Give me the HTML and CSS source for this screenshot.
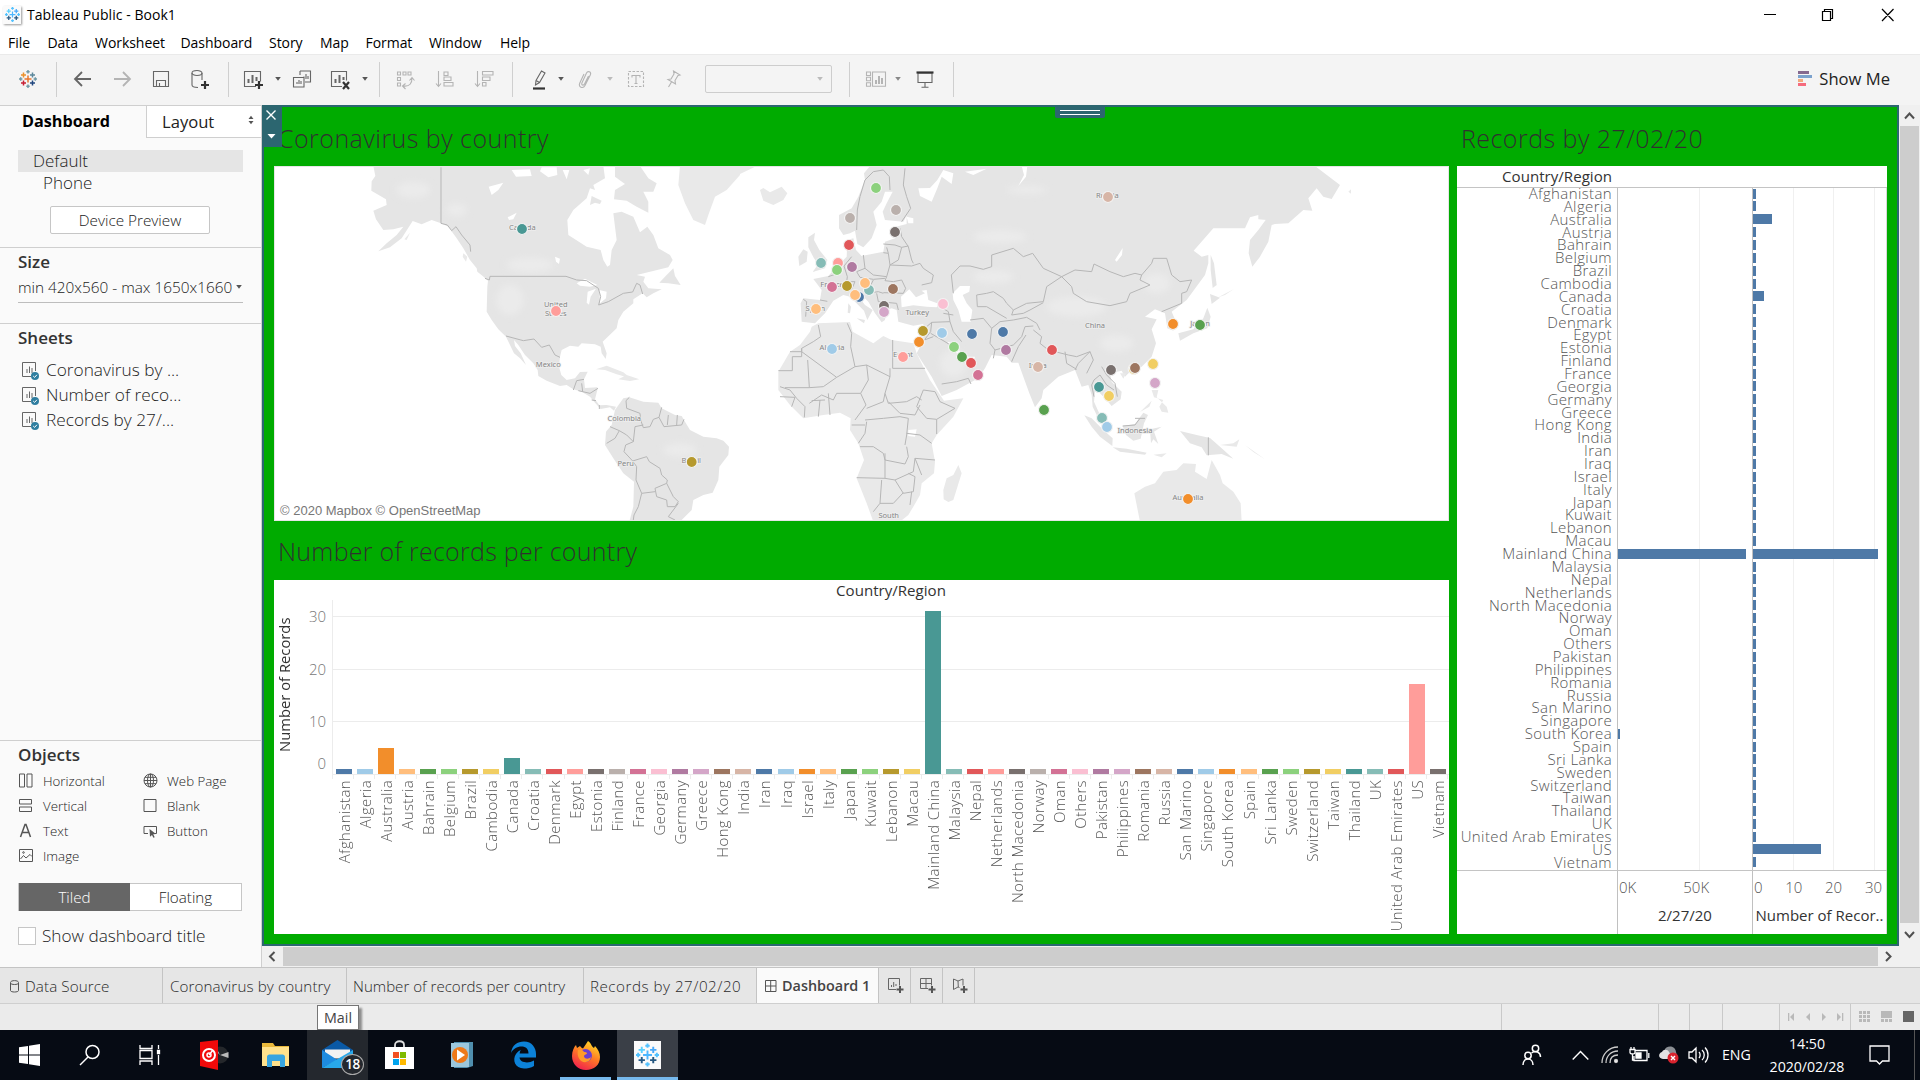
FILE: index.html
```html
<!DOCTYPE html>
<html lang="en">
<head>
<meta charset="utf-8">
<title>Tableau Public - Book1</title>
<link rel="stylesheet" href="styles.css">
</head>
<body>
<svg class="defs" width="0" height="0">
  <defs>
    <symbol id="plus-logo" viewBox="0 0 18 18">
      <path class="p1" d="M9 5.5v7M5.5 9h7"/>
      <path class="p2" d="M4.5 2.5v5M2 5h5"/>
      <path class="p3" d="M13.500 2.500v5M11 5h5"/>
      <path class="p4" d="M4.500 10.500v5M2 13h5"/>
      <path class="p5" d="M13.500 10.500v5M11 13h5"/>
      <path class="p6" d="M9 0v3.400M7.300 1.700h3.400M9 14.600V18M7.300 16.300h3.400M0 9h3.400M1.700 7.300v3.400M14.600 9H18M16.300 7.300v3.400"/>
    </symbol>
    <symbol id="caret" viewBox="0 0 8 6"><path d="M1.200 1h5.600L4 4.800z"/></symbol>
    <symbol id="sheet" viewBox="0 0 18 20">
      <path d="M9 14.500H.5V.5h13v8.500" fill="none" stroke="#666"/>
      <path d="M5 11V7M7.500 11V4.500M10 11V6" stroke="#666"/>
      <circle cx="13" cy="14" r="4" fill="#2f7ea0"/><path d="M11.200 14l1.400 1.400 2.300-2.600" fill="none" stroke="#fff"/>
    </symbol>
  </defs>
</svg>

<header class="titlebar">
  <span class="app-icon"><svg class="logo blue" width="15" height="15"><use href="#plus-logo"/></svg></span>
  <span class="app-title">Tableau Public - Book1</span>
  <svg class="winbtns" width="132" height="16" viewBox="0 0 132 16" fill="none" stroke="#000" stroke-width="1.2">
    <path d="M0 7.500h12M58.500 4.500h8v9h-8zM60.500 4.500v-2h8v9h-2M118 2l11.500 12M129.500 2L118 14"/>
  </svg>
</header>

<nav class="menubar">
  <span class="m1">File</span><span class="m2">Data</span><span class="m3">Worksheet</span><span class="m4">Dashboard</span><span class="m5">Story</span><span class="m6">Map</span><span class="m7">Format</span><span class="m8">Window</span><span>Help</span>
</nav>

<div class="toolbar">
  <svg class="ic logo" viewBox="-3 -3 24 24"><use href="#plus-logo" width="18" height="18"/></svg>
  <i class="sep g16"></i>
  <svg class="ic g14 bold" viewBox="0 0 24 24"><path d="M20 12H4.500M11 5l-7 7 7 7"/></svg>
  <svg class="ic g15 bold dim" viewBox="0 0 24 24"><path d="M4 12h15.500M13 5l7 7-7 7"/></svg>
  <svg class="ic g15" viewBox="0 0 24 24"><path d="M4.500 4.500h15v15h-15zM7.500 19.500v-6h9v6M10.500 19v-3"/></svg>
  <svg class="ic g15" viewBox="1 0 24 24"><ellipse cx="10" cy="6" rx="5" ry="2.500"/><path d="M5 6v12c0 1.500 2 2.500 6 2.500M15 6v7"/><path class="heavy" d="M18 14v8M14 18h8"/></svg>
  <i class="sep g16"></i>
  <svg class="ic g12" viewBox="0 0 24 24"><path d="M15 19.500H3.500v-15h16v10"/><path class="mid" d="M7.500 16v-4M11.500 16V8M15.500 14v-4"/><path class="heavy" d="M18 14v8M14 18h8"/></svg>
  <svg class="car g9" viewBox="0 0 8 6"><use href="#caret"/></svg>
  <svg class="ic g8" viewBox="0 0 24 24"><path d="M10 4H20.500v11H15M10 4v4M3.500 10.500h10.500v9.500H3.500zM7 17v-2M9 17v-4M11 17v-3M14 12V9.500M16 12V7M18 12V9"/></svg>
  <svg class="ic g14" viewBox="0 0 24 24"><path d="M14 19.500H3.500v-15h15v9"/><path class="mid" d="M7.500 16v-4M11.500 16V8M15.500 13v-3"/><path class="heavy" d="M15 15l6 7M21 15l-6 7"/></svg>
  <svg class="car g9" viewBox="0 0 8 6"><use href="#caret"/></svg>
  <i class="sep g10"></i>
  <svg class="ic g13 dim" viewBox="0 0 24 24"><path d="M4.500 5h3v3h-3zM10 5h3v3h-3zM15 5h3v3h-3zM4.500 10.500h3v3h-3zM4.500 16h3v3h-3zM10 19c7 1 9-3 9-8M12.500 16.500L9.500 19l3 3M16.500 13.500l2.500-3 2.500 3"/></svg>
  <svg class="ic g16 dim" viewBox="0 0 24 24"><path d="M5.500 4v15M3 16.500l2.500 3 2.500-3M11 5h4v3.500h-4zM11 10h7v3.500h-7zM11 15.500h9V19h-9z"/></svg>
  <svg class="ic g15 dim" viewBox="0 0 24 24"><path d="M5.500 4v15M3 16.500l2.500 3 2.500-3M10.500 4.500H21V8H10.500zM10.500 10H18v3.500h-7.500zM10.500 15.500H14V19h-3.500z"/></svg>
  <i class="sep g16"></i>
  <svg class="ic g14" viewBox="0 0 24 24"><path d="M9 13.500L14.500 4l3.500 2-5.500 9.500L8.500 18zM9 13.500l3.500 2"/><path class="heavy" d="M6 21.500h12" stroke-width="2"/></svg>
  <svg class="car g6" viewBox="0 0 8 6"><use href="#caret"/></svg>
  <svg class="ic g8 dim" viewBox="0 0 24 24"><path d="M15.500 9l-4 8c-1 2-3.500 1-2.600-1L13.500 6c1.300-2.600 5-1 3.900 1.700L12 18.500c-2 3.800-7 1.500-5.300-2.300L11 7"/></svg>
  <svg class="car g9 dimc" viewBox="0 0 8 6"><use href="#caret"/></svg>
  <svg class="ic g10 dim" viewBox="0 0 24 24"><path d="M4.500 4.500h15v15h-15z" stroke-dasharray="2.500 1.500"/><path d="M8 8.500h8M12 8.500v8M8 8v2.500M16 8v2.500M10.500 16.500h3"/></svg>
  <svg class="ic g13 dim" viewBox="0 0 24 24"><path d="M12.500 4l6.500 4-2 .5-3 5 .5 3.500L7 12.500l3-.5 3-5zM10.500 15L7.500 20"/></svg>
  <span class="fitbox g20"><svg class="car dimc" viewBox="0 0 8 6"><use href="#caret"/></svg></span>
  <i class="sep g17"></i>
  <svg class="ic g14 dim" viewBox="0 0 24 24"><path d="M2.500 5h4v3.500h-4zM2.500 10.300h4v3.500h-4zM2.500 15.700h4v3.500h-4zM8.500 5h13v14.200h-13z"/><path class="mid" d="M12 17v-4M15 17V9M18 17v-6"/></svg>
  <svg class="car g6 dimc2" viewBox="0 0 8 6"><use href="#caret"/></svg>
  <svg class="ic g11" viewBox="0 0 24 24"><path d="M5 6h14v9.500H5zM12 15.500V20M8.500 20.300h7"/><path class="heavy" d="M3.500 5.500h17" stroke-width="1.800"/></svg>
  <i class="sep g16"></i>
  <span class="showme"><svg width="15" height="16" viewBox="0 0 15 16"><path fill="#85698f" d="M0 0h11v3H0z"/><path fill="#7ca2cd" d="M0 4h14v3H0z"/><path fill="#f2a97d" d="M0 8h5v3H0z"/><path fill="#f56b7d" d="M0 12h8v3H0z"/></svg>Show Me</span>
</div>

<main class="workspace">
  <aside class="sidebar">
    <div class="sidetabs"><b>Dashboard</b><span>Layout<svg width="8" height="10" viewBox="0 0 8 10"><path fill="#555" d="M1.500 4h5L4 .8zM1.500 6h5L4 9.200z"/></svg></span></div>
    <div class="devices"><p class="sel">Default</p><p class="phone">Phone</p><button>Device Preview</button></div>
    <section class="size"><h2>Size</h2><div class="select">min 420x560 - max 1650x1660<svg class="car" viewBox="0 0 8 6"><use href="#caret"/></svg></div></section>
    <section class="sheets"><h2>Sheets</h2>
      <p><svg width="18" height="20"><use href="#sheet"/></svg>Coronavirus by ...</p>
      <p><svg width="18" height="20"><use href="#sheet"/></svg>Number of reco...</p>
      <p><svg width="18" height="20"><use href="#sheet"/></svg>Records by 27/...</p>
    </section>
    <section class="objects"><h2>Objects</h2>
      <div class="objgrid">
        <p><svg viewBox="0 0 15 15"><path d="M.5 1h5v13h-5zM8 1h5v13H8z"/></svg>Horizontal</p>
        <p><svg viewBox="0 0 15 15"><circle cx="7.500" cy="7.500" r="6.500"/><ellipse cx="7.500" cy="7.500" rx="3" ry="6.500"/><path d="M1 7.500h13M2 4.300h11M2 10.700h11M7.500 1v13"/></svg>Web Page</p>
        <p><svg viewBox="0 0 15 15"><path d="M.5 1.500h12v4.500H.5zM.5 9h12v4.500H.5z"/></svg>Vertical</p>
        <p><svg viewBox="0 0 15 15"><path d="M1 1.500h12v12H1z"/></svg>Blank</p>
        <p><svg viewBox="0 0 15 15"><path stroke-width="1.500" d="M1.500 14L6 1.500h1L11.500 14M3 9.500h7"/></svg>Text</p>
        <p><svg viewBox="0 0 15 15"><path d="M5 10.500H1v-7h12.500v7H12"/><path fill="#555" stroke="none" d="M6.500 6l6.500 5-2.800.3 1.500 2.900-1.300.6-1.400-2.900-2 1.900z"/></svg>Button</p>
        <p><svg viewBox="0 0 15 15"><path d="M.5 1.500h13v12H.5zM1.500 11l3-3.500 2.500 2.500 4-3.500 2 2"/><circle cx="4.500" cy="4.500" r=".8"/></svg>Image</p>
      </div>
      <div class="toggle"><span class="on">Tiled</span><span>Floating</span></div>
      <label class="check"><i></i>Show dashboard title</label>
    </section>
  </aside>

  <div class="stage">
    <div class="canvas">
      <div class="dash">
        <div class="dash-left">
          <h1>Coronavirus by country</h1>
          <div class="map">
            <svg id="map" viewBox="274 166 1175 355" width="1175" height="355">
              <defs><filter id="soft" x="-50%" y="-50%" width="200%" height="200%"><feGaussianBlur stdDeviation="9"/></filter></defs>
              <g class="land" transform="translate(360 160) scale(.33333)">
                <path d="M40,18L46,48 35,64 34,92 78,118 80,135 40,152 48,178 70,210 100,208 130,200 110,225 80,250 55,274 90,262 125,235 158,183 185,193 215,180 243,190 265,200 290,235 310,265 330,300 350,325 352,335 368,348 384,362 382,380 380,455 395,480 415,508 438,530 450,555 462,580 480,595 498,615 482,580 465,558 462,540 475,555 495,585 520,610 533,630 535,648 560,662 600,678 620,675 640,688 665,695 690,710 705,728 722,747 750,742 762,752 768,740 740,735 718,736 705,718 712,690 712,682 675,684 672,658 683,635 660,636 645,655 620,660 604,645 597,620 600,590 605,570 630,557 655,560 665,550 705,553 722,560 725,580 737,597 740,580 728,545 770,505 775,480 790,455 820,430 820,418 848,400 860,412 880,400 905,388 865,385 850,365 855,350 830,345 870,335 925,322 938,300 930,285 895,265 880,225 862,200 840,217 820,170 785,155 760,160 765,200 770,240 755,270 750,315 742,320 730,300 722,270 680,260 625,225 622,180 640,150 680,115 690,85 705,90 700,75 735,55 730,18z"/>
                <path d="M765,18H840L865,55 890,70 880,95 850,95 865,125 865,158 830,140 800,122 762,118 765,90 795,72 765,50zM690,135L695,108 725,122 720,132 705,128zM898,368L920,345 940,325 945,348 962,375 925,370z"/>
                <path class="lt" d="M960,18L955,75 975,130 1000,180 1035,195 1045,165 1065,110 1100,90 1140,45V18z"/>
                <path class="lt" d="M708,628L740,617 790,637 812,655 770,643 735,630zM775,658L800,645 838,658 810,663zM310,280L322,290 318,305 308,290zM150,218L140,240 133,238z"/>
                <path d="M765,750L790,715 808,712 850,725 895,728 905,745 945,765 965,768 975,785 990,810 1030,830 1070,835 1090,842 1107,860 1105,885 1078,920 1075,960 1058,998 1030,1005 1000,1020 995,1050 960,1085H808L820,1040 822,965 790,940 760,895 735,855 738,815 755,795z"/>
                <g class="relief" filter="url(#soft)"><ellipse cx="510" cy="315" rx="70" ry="22"/><ellipse cx="160" cy="90" rx="50" ry="25"/><ellipse cx="290" cy="150" rx="30" ry="20"/><ellipse cx="450" cy="420" rx="40" ry="45"/><ellipse cx="960" cy="870" rx="50" ry="20"/></g>
                <path class="sea" d="M650,370L675,356 712,375 690,380 660,377zM683,395L708,386 692,410 687,434 680,428zM718,390L740,395 738,415 720,430zM386,80L430,68 415,90 395,105zM443,172L470,158 460,178 447,180zM585,290L600,296 597,312 588,305zM455,30L510,28 515,48 468,50zM540,34L565,52 592,45 590,22 545,22zM608,30L628,30 620,58zM670,30L690,25 685,45z"/>
                <path class="brd" d="M243,22V190L262,195 275,212 288,200 305,225 330,255 332,275M375,355L388,360 390,349H618L650,360 680,362 715,385 722,410 716,435 745,425 790,400 818,396 830,370 840,375 848,402M438,528L490,542 522,537 545,562 568,555 585,585 600,592M640,690L650,662 672,658M655,692L690,700 714,685M665,670L668,695M695,720L708,722M718,735V747M808,712L798,722 800,745 840,760 842,780 850,803 870,800 880,778 897,772 905,742M897,772L912,800 965,795 972,778M925,765L922,795M952,765L950,795M750,800L778,812 800,825 820,845 825,800 850,795M778,812L765,835 740,850M820,845L797,855 792,875 818,903 860,890 868,905 900,925 905,945 922,960 920,970 885,985 890,1010 920,1020 922,1040 945,1040 955,1025 940,1010 920,970M818,903L830,920 828,960 845,1000 885,995M845,1000L835,1040 822,1065 820,1080M955,1030L925,1070 945,1080"/>
              </g>
              <g class="land" transform="translate(740 160) scale(.33333)">
                <path class="lt" d="M0,18H50L0,42zM60,90L70,84 90,97 125,80 142,100 130,120 100,135 70,122zM655,915L665,940 640,1020 625,1026 611,1018 610,990 620,955 640,945z"/>
                <path d="M205,232L225,218 222,240 238,270 262,300 255,325 218,336 235,312 222,295 205,262zM175,290L190,268 203,275 200,305 178,318zM390,18H505L512,145 490,185 435,180 428,155 440,130 458,95 435,95 425,125 400,155 410,195 395,235 370,262 352,252 345,212 330,220 310,225 297,205 297,165 335,145 355,110 375,60 372,40z"/>
                <path d="M500,18H1725L1800,75 1775,117 1750,110 1730,85 1705,115 1717,152 1690,150 1645,190 1605,192 1595,195 1585,245 1560,290 1537,320 1526,280 1530,240 1555,210 1595,155 1580,180 1555,178 1555,165 1530,172 1515,205 1420,205 1361,272 1385,290 1405,285 1405,310 1395,345 1340,420 1295,455 1310,490 1300,512 1282,505 1275,460 1245,448 1215,470 1250,478 1235,508 1248,550 1235,590 1205,620 1170,635 1155,650 1145,632 1110,640 1115,665 1145,695 1142,718 1115,738 1095,715 1080,700 1065,695 1062,725 1080,765 1095,795 1080,785 1058,740 1055,705 1045,675 1025,680 1005,630 955,650 910,690 905,715 885,742 868,700 850,650 835,608 815,608 800,590 755,585 735,625 715,655 650,690 605,708 575,650 530,580 548,545 550,492 520,497 475,485 470,450 455,445 440,450 435,480 425,487 405,460 385,425 360,400 345,395 375,435 398,450 382,480 372,452 330,410 310,405 280,422 255,460 225,490 185,485 182,430 190,415 240,420 245,390 220,357 265,348 290,320 320,290 322,240 340,235 348,270 365,288 430,275 435,245 465,235 468,200 500,192z"/>
                <path class="lt" d="M235,490L330,486 338,515 400,550 430,528 455,540 520,550 530,580 550,620 570,660 605,712 612,722 670,715 640,770 590,825 575,850 585,905 582,940 545,970 540,1005 520,1040 505,1065 480,1085H400L380,1030 350,955 372,900 355,850 330,810 332,775 300,758 250,765 190,775 150,735 115,690 115,635 150,575 180,555 210,515 215,500z"/>
                <g class="relief" filter="url(#soft)"><ellipse cx="640" cy="610" rx="40" ry="40"/><ellipse cx="1010" cy="440" rx="90" ry="30"/><ellipse cx="1130" cy="550" rx="50" ry="25"/><ellipse cx="780" cy="230" rx="80" ry="20"/><ellipse cx="860" cy="90" rx="60" ry="12"/><ellipse cx="760" cy="350" rx="60" ry="20"/><ellipse cx="1250" cy="370" rx="40" ry="30"/></g>
                <path class="sea" d="M483,410L508,388 528,412 555,400 545,392 560,390 565,420 598,432 590,442 560,440 520,436 485,442zM638,400L660,378 690,378 688,395 668,405 680,430 697,450 692,485 665,485 655,450 640,420zM622,545L642,550 672,590 705,590 700,604 680,600 655,585zM610,30L640,40 635,72 605,50 592,85 575,125 540,108 535,85 570,84 592,60zM675,35L740,26 700,45zM835,78L858,50 862,18H845L852,45zM500,170L520,175 520,190 505,190zM505,810L530,808 525,830 505,828zM1125,300L1148,264 1146,285 1130,305z"/>
                <path d="M325,430L333,440 330,460 323,458zM350,475L375,480 372,490z"/>
                <path class="brd" d="M375,60L360,110 352,150 350,210M375,60L400,35 430,30 448,50 450,90M495,25L490,75 500,110 512,145 485,185M480,205L485,230 505,260 515,300 520,310M430,252L465,255 485,262 505,258M445,280L440,262M370,285L375,325 400,345 440,350 450,315 445,280 430,278M450,315L475,300 485,262M450,315L515,318 540,310 550,325 580,345 575,368 545,375M440,350L435,362 460,365 485,360 497,385 490,400 430,398M335,290L312,318 322,350 320,365 345,365M265,350L300,338M375,325L350,335 360,352 400,358 435,355M400,360L380,400 415,395 430,400M410,400L415,425 470,430 475,450M200,425L197,470M190,418L200,425M240,420L262,424M345,365L330,400M640,400L634,345 660,318 690,318 730,328 755,320 755,285 820,265 850,290 878,280 910,325 965,350M965,350L920,380 910,425 860,430 820,450 800,430 790,415 760,395 740,400 710,405 712,440M712,440L740,440 800,475M820,450L815,465 850,460 870,450 910,428M690,480L730,475 755,505 750,550 765,570 760,595M755,505L780,485 820,480 860,472 890,490 900,510M765,570L820,555 845,530 855,500 880,498M858,525L835,560 815,605M880,510L905,530 900,550 925,570 985,585M985,585L1010,590 1050,575 1060,600 1040,640M975,575L980,610 1010,628M1005,630L1015,610 1050,575M600,440L625,455 630,485 575,487 560,500M610,460L640,465 M575,487L572,515 553,540 580,530 M572,520L615,545 635,558M630,485L640,515 665,545M605,672L650,665 685,655 693,672M965,350L995,380 1000,400 1040,425 1110,437 1160,425 1170,400 1230,375 1200,360 1205,345 1185,340 1150,350 1110,335 1062,312 1055,335 1005,330 965,350M1205,345L1235,310 1240,295 1280,295 1295,345 1320,365 1355,360 1340,395 1325,400 1325,430 1265,455M1085,620L1100,645 1125,670 1132,710M1062,660L1080,645 1100,675 1122,690M1062,660L1055,675 1062,710"/>
                <path class="brd" d="M235,495L242,530 220,545 185,565V575H150M185,565V590H157V632H115M185,575L290,652 345,620 332,560 335,520 322,490M345,620L380,615 450,650M458,540V625H555M450,625V650L435,700M203,600L208,683H135M208,683L250,680 290,652M380,615L385,660 362,700 290,700 280,720 245,705 208,730M265,700L270,765M240,720L235,770M215,722L255,720M362,700L378,735 345,780M435,700L430,725 380,745M435,700L445,730 500,725 530,710 545,720M445,725L480,760 525,765 540,735M550,690L530,740 560,775 590,778 645,745 600,725 585,695 550,690M590,778V822M375,780L430,775 480,770 505,775 500,825 495,855M380,785L375,820 355,850M335,795H375M360,860L400,860 430,880 435,900M435,880V955L350,953M435,900L495,912 505,890 500,860M435,955L465,960 520,935 525,895 585,900M500,820L540,825 575,850M465,960L490,1000 520,995 525,950 505,940M425,960L420,1030 460,1030 490,998M420,1030L400,1055M515,995L510,1035M120,680L150,690 170,715M120,710L165,712 155,740M170,715L195,740 193,772M525,895L545,945"/>
              </g>
              <g class="land" transform="translate(1020 160) scale(.33333)">
                <path d="M193,766L215,775 250,810 278,835 277,858 240,830 215,800zM278,862L320,866 380,878 375,884 300,875zM308,798L345,792 370,758 384,765 372,790 362,836 340,842 318,825zM390,808L425,800 402,815 415,852 400,838 393,850zM480,813L530,825 570,834 600,860 640,896 605,882 560,886 545,862 510,850zM475,520L520,508 550,475 562,443 572,470 562,505 520,520 480,542zM570,402L600,413 575,432zM572,285L582,310 590,375 578,384 572,330z"/>
                <path class="lt" d="M395,690L415,690 410,712 440,740 445,758 425,755 418,740 430,720 402,712zM300,640L318,640 310,656zM600,855L640,850 658,838 650,860zM360,756L395,722 388,740zM400,884L440,880 425,892zM985,95L993,88V101zM955,135L970,139zM675,855L735,898 700,876zM595,412L642,387 615,405z"/>
                <path class="lt" d="M360,1085L343,1000 375,980 405,970 430,935 470,930 490,910 528,912 525,935 560,957 575,900 600,945 608,970 640,995 662,1030 665,1085z"/>
                <path class="brd" d="M565,832V886M345,775H375M308,798L345,795 360,775"/>
              </g>
              <g id="labels"></g>
              <g id="dots"></g>
            </svg>
            <span class="attrib">© 2020 Mapbox © OpenStreetMap</span>
          </div>
          <h1 class="tight">Number of records per country</h1>
          <div class="colchart">
            <div class="cc-head">Country/Region</div>
            <div class="cc-axis"><span class="cc-title">Number of Records</span><span class="cc-tick t30">30</span><span class="cc-tick t20">20</span><span class="cc-tick t10">10</span><span class="cc-tick t0">0</span></div>
            <div class="cc-plot" id="cols"></div>
          </div>
        </div>
        <div class="dash-right">
          <h1>Records by 27/02/20</h1>
          <div class="rowchart">
            <div class="rc-head"><span>Country/Region</span></div>
            <div class="rc-rows" id="rows"></div>
            <div class="rc-foot">
              <div></div>
              <div class="f1"><div class="ticks"><span>0K</span><span>50K</span></div><b>2/27/20</b></div>
              <div class="f2"><div class="ticks"><span>0</span><span>10</span><span>20</span><span>30</span></div><b>Number of Recor..</b></div>
            </div>
          </div>
        </div>
        <div class="closebox"><svg width="20" height="42" viewBox="0 0 20 42"><path d="M4.500 5.500l9 9M13.500 5.500l-9 9" stroke="#fff" stroke-width="1.400"/><path d="M5.500 29h8l-4 4.500z" fill="#fff"/></svg></div>
        <div class="grip"><i></i><i></i></div>
      </div>
      <div class="vscroll"><svg viewBox="0 0 21 21"><path d="M6 13.500l4.500-5 4.500 5"/></svg><i></i><svg viewBox="0 0 21 21"><path d="M6 8l4.500 5L15 8"/></svg></div>
    </div>
    <div class="hscroll"><svg viewBox="0 0 21 21"><path d="M12.500 6L8 10.500l4.500 4.500"/></svg><i></i><svg viewBox="0 0 21 21"><path d="M8 6l4.500 4.500L8 15"/></svg><em></em></div>
  </div>
</main>

<nav class="tabs">
  <span class="tab ds"><svg width="9" height="13" viewBox="0 0 9 13" fill="none" stroke="#555"><path d="M.5 2.500C.5 0 8.500 0 8.500 2.500v8c0 2-8 2-8 0zM.5 3c0 2 8 2 8 0"/></svg>Data Source</span>
  <span class="tab w184">Coronavirus by country</span>
  <span class="tab w237">Number of records per country</span>
  <span class="tab w173">Records by 27/02/20</span>
  <span class="tab active"><svg width="12" height="12" viewBox="0 0 12 12" fill="none" stroke="#555"><path d="M.5.5h10.500v11H.5zM5.700.5v11M.5 6h10.500"/></svg>Dashboard 1</span>
  <span class="tab new"><svg viewBox="0 0 16 16"><path d="M8 11.500H.5V.5h11v7M3.500 9V7M5.700 9V4M8 8V6"/><path class="pl" d="M12 8v7M8.500 11.500h7"/></svg></span>
  <span class="tab new"><svg viewBox="0 0 16 16"><path d="M8 10.500H.5V.5h11v7M6 .5v10M.5 5.500h11"/><path class="pl" d="M12 8v7M8.500 11.500h7"/></svg></span>
  <span class="tab new"><svg viewBox="0 0 16 16"><path d="M7.500 9.500L6 9l-4.500 2.500V1l4.500 2 5-2v6.500M6 3l.300 6"/><path class="pl" d="M12 8v7M8.500 11.500h7"/></svg></span>
</nav>

<div class="status">
  <span class="s0"></span><span class="s1"></span><span class="s2"></span><span class="s3"></span><span class="s4"></span>
  <span class="s5"><svg width="60" height="10" viewBox="0 0 60 10" fill="#b9b9b9"><path d="M1 1h1.300v8H1zM7 1v8L3 5zM23 1v8l-4-4zM35 1v8l4-4zM50 1v8l4-4zM55 1h1.300v8H55z"/></svg></span>
  <span class="s6"><svg width="56" height="12" viewBox="0 0 56 12" fill="#b9b9b9"><path d="M0 0h3v3H0zM4 0h3v3H4zM8 0h3v3H8zM0 4h3v3H0zM4 4h3v3H4zM8 4h3v3H8zM0 8h3v3H0zM4 8h3v3H4zM8 8h3v3H8zM22 0h11v7H22zM22 8h3v3h-3zM26 8h3v3h-3zM30 8h3v3h-3z"/><path fill="#666" d="M44 0h11v11H44z"/></svg></span>
  <span class="tooltip">Mail</span>
</div>

<footer class="taskbar">
  <div class="sys">
    <span><svg width="22" height="22" viewBox="0 0 22 22"><path fill="#fff" d="M0 3.200l9-1.300v8.600H0zM10 1.700L21 0v10.500H10zM0 11.500h9v8.600l-9-1.300zM10 11.500h11V22l-11-1.700z"/></svg></span>
    <span><svg width="22" height="22" viewBox="0 0 22 22" fill="none" stroke="#fff" stroke-width="1.500"><circle cx="13.500" cy="8" r="6.500"/><path d="M9 13l-8 8"/></svg></span>
    <span><svg width="22" height="22" viewBox="0 0 22 22" fill="none" stroke="#fff" stroke-width="1.300"><path d="M1 1v3.500h12V1M1 6.500h12v8H1zM1 21v-4h12v4M19.500 1v4M19.500 11v10"/><path fill="#fff" d="M18.500 6.500h2v3h-2z"/></svg></span>
  </div>
  <div class="apps">
    <span><svg width="32" height="30" viewBox="0 0 32 30"><circle cx="22" cy="15" r="8.500" fill="#24272b"/><path d="M22 15l8.500-3v6zM22 15l-6-6h3z" fill="#bbb"/><path fill="#f00a0a" d="M2 2L20 0v30L2 26z"/><circle cx="11" cy="15" r="6" fill="none" stroke="#fff" stroke-width="2"/><circle cx="11" cy="15" r="2" fill="none" stroke="#fff" stroke-width="1.500"/><path d="M11 15l4-5" stroke="#fff" stroke-width="1.500"/></svg></span>
    <span><svg width="28" height="26" viewBox="0 0 28 26"><path fill="#e9b93c" d="M0 1h11l2 3h14v7H0z"/><path fill="#ffe28c" d="M0 5h27v19H0z"/><path fill="#37a5e0" d="M5 25V15c0-1.500 1-2.500 2.500-2.500h13c1.500 0 2.500 1 2.500 2.500v10h-5v-6h-8v6z"/></svg></span>
    <span class="mail"><svg width="32" height="30" viewBox="0 0 32 30"><path fill="#0a59a5" d="M0 10L15.500 0 31 10v6H0z"/><path fill="#f2f2f2" d="M3 9.500h25v9H3z"/><path fill="#1d8be0" d="M0 10l15.500 10L0 28z"/><path fill="#28a8ea" d="M31 10L0 28h31z"/></svg><em>18</em></span>
    <span><svg width="30" height="30" viewBox="0 0 30 30"><path d="M10 9V5c0-5 9-5 9 0v4" fill="none" stroke="#ddd" stroke-width="1.800"/><path fill="#fff" d="M0 7h29v22H0z"/><path fill="#f25022" d="M8 12h6v6H8z"/><path fill="#7fba00" d="M15 12h6v6h-6z"/><path fill="#00a4ef" d="M8 19h6v6H8z"/><path fill="#ffb900" d="M15 19h6v6h-6z"/></svg></span>
    <span><svg width="26" height="28" viewBox="0 0 26 28"><path fill="#4f8fae" d="M5 1h19v24l-6 2H5z"/><path fill="#9cc7dc" d="M2 2h18v24H2z"/><circle cx="11" cy="14" r="8" fill="#ee7a1a"/><path fill="#fff" d="M8 8.500v11l8-5.500z"/></svg></span>
    <span><svg width="27" height="28" viewBox="0 0 27 28"><path fill="#0c82d8" d="M1 12C2 4 7.500.5 14 .5 22 .5 26 7 26 13v3.500H9.500c.4 5 8.500 6.500 14.500 3v5.500c-3 2-7 2.500-10 2.500C5 27.500 2 19 6 13c1.500-2.300 3.500-3.500 5-4.200-.8 1-1.300 2.200-1.300 3.700h8.800c0-6-4-7-7-7C7 5.500 3 8 1 12z"/></svg></span>
    <span class="running ff"><svg width="30" height="30" viewBox="0 0 30 30"><defs><linearGradient id="fx" x1=".8" y1="0" x2=".3" y2="1"><stop offset="0" stop-color="#ffe226"/><stop offset=".5" stop-color="#ff7a25"/><stop offset="1" stop-color="#f0204f"/></linearGradient></defs><path fill="url(#fx)" d="M1 16C1 11 3 7 5 5l1 3 3-2c1 1 1.500 2 3 2.500L17 1c4 3 3 5 6 7l1-2c3 3 5 7 5 11 0 8-6 13-14 13S1 24 1 16z"/><circle cx="14.500" cy="15.500" r="6.500" fill="#6b3ed0"/><path fill="#ff9a2a" d="M7 10c3-1 5 0 6 2 2 0 3 .5 3 1.500-1 1.500-3 1-3 3 1 3 5 2.500 7 .5-1 5-6 6-9 4.500C7 19 6 14 7 10z"/></svg></span>
    <span class="running current"><em class="tabicon"><svg class="logo blue" width="23" height="24"><use href="#plus-logo"/></svg></em></span>
  </div>
  <div class="tray">
    <svg width="20" height="22" viewBox="0 0 20 22" fill="none" stroke="#fff" stroke-width="1.500"><circle cx="13.500" cy="4.500" r="3.200"/><circle cx="6" cy="11.500" r="3.200"/><path d="M1 21c0-8 10-8 10 0M9.500 9c4-3 9-1 9 4"/></svg>
    <svg class="t1" width="17" height="12" viewBox="0 0 17 12" fill="none" stroke="#fff" stroke-width="1.400"><path d="M.7 10.500l7.800-8 7.800 8"/></svg>
    <svg class="t2" width="18" height="18" viewBox="0 0 18 18" fill="none" stroke="#ccc" stroke-width="1.300"><path d="M1 17C1 8 8 1 17 1M5 17C5 10 10 5 17 5M9 17c0-5 3-8 8-8"/><circle cx="15" cy="15" r="1.500" fill="#fff"/></svg>
    <svg class="t3" width="21" height="16" viewBox="0 0 21 16" fill="none" stroke="#fff" stroke-width="1.300"><path d="M6 3.500h12v10H5V9M19.800 6v5M1 2.500h5v3c0 2-5 2-5 0zM2 0v2M5 0v2M3.500 7v6H5"/><path fill="#fff" d="M7 6h5v5H7z"/></svg>
    <svg class="t4" width="20" height="18" viewBox="0 0 20 18"><path fill="#8b8f94" d="M5 5c2-6 11-6 12 1l1 4H6z"/><path fill="#e3e3e3" d="M4 13c-5 0-5-6-1-7 1-3 6-3 7 0l3 4-2 3z"/><circle cx="14" cy="12" r="5.500" fill="#d9232e"/><path d="M12 10l4 4M16 10l-4 4" stroke="#fff" stroke-width="1.400"/></svg>
    <svg class="t5" width="21" height="18" viewBox="0 0 21 18" fill="none" stroke="#fff" stroke-width="1.300"><path d="M1 6h3l4-4v14l-4-4H1zM11 6c1.500 1.500 1.500 4.500 0 6M14 4c3 2.500 3 7.500 0 10M17 1.500c4 4 4 11 0 15"/></svg>
    <span class="lang">ENG</span>
    <span class="clock">14:50<br>2020/02/28</span>
    <svg class="t6" width="21" height="20" viewBox="0 0 21 20" fill="none" stroke="#fff" stroke-width="1.300"><path d="M1 1h19v15h-6.500l-3 3-3-3H1z"/></svg>
    <i class="peek"></i>
  </div>
</footer>
<script src="charts.js"></script>
</body>
</html>
```
FILE: styles.css
```css
* { box-sizing: border-box; margin: 0; padding: 0; }
body { width: 1920px; height: 1080px; overflow: hidden; display: flex; flex-direction: column; background: #fff; font: 300 15px/20px "Open Sans", "Noto Sans", sans-serif; color: #333; }
svg { display: block; flex: none; }
.defs { position: absolute; }
i, em { font-style: normal; }
.p1 { stroke: #e8762d; } .p2 { stroke: #eb912b; } .p3 { stroke: #5b879b; } .p4 { stroke: #c72035; } .p5 { stroke: #1f457e; } .p6 { stroke: #7199a6; }
#plus-logo path { fill: none; stroke-width: 1.5; }
.blue { filter: grayscale(1) sepia(1) hue-rotate(165deg) saturate(3.2); }

.titlebar { height: 29px; display: flex; align-items: center; padding-left: 3px; font-weight: 400; font-size: 14px; color: #000; }
.app-icon { width: 18px; height: 18px; background: #fafafa; box-shadow: 1px 1px 2px #999; display: flex; align-items: center; justify-content: center; margin-right: 6px; }
.app-title { letter-spacing: .05px; }
.winbtns { margin-left: auto; margin-right: 24px; }
.menubar { height: 25px; display: flex; align-items: center; padding: 2px 0 0 8px; font-weight: 400; font-size: 14px; letter-spacing: -.05px; color: #000; }
.menubar span { white-space: nowrap; }
.m1 { width: 39.500px; } .m2 { width: 47.500px; } .m3 { width: 85.500px; } .m4 { width: 88.500px; } .m5 { width: 51px; } .m6 { width: 45.500px; } .m7 { width: 63.500px; } .m8 { width: 71px; }

.toolbar { height: 51px; background: #f4f4f4; border-top: 1px solid #eaeaea; display: flex; align-items: center; padding: 0 0 2px 16px; }
.ic { width: 24px; height: 24px; fill: none; stroke: #666; stroke-width: 1.1; }
.ic.bold { stroke-width: 1.8; }
.ic.dim { stroke: #b4b4b4; }
.ic .heavy { stroke: #333; stroke-width: 2.2; }
.ic .mid { stroke-width: 2; }
.car { width: 8px; height: 6px; fill: #555; }
.dimc { fill: #bbb; } .dimc2 { fill: #888; }
.sep { width: 1px; height: 35px; background: #cfcfcf; }
.g6 { margin-left: 6px; } .g8 { margin-left: 8px; } .g9 { margin-left: 9px; } .g10 { margin-left: 10px; } .g11 { margin-left: 11px; } .g12 { margin-left: 12px; } .g13 { margin-left: 13px; } .g14 { margin-left: 14px; } .g15 { margin-left: 15px; } .g16 { margin-left: 16px; } .g17 { margin-left: 17px; } .g20 { margin-left: 20px; }
.fitbox { width: 127px; height: 28px; border: 1px solid #cdcdcd; border-radius: 2px; display: flex; align-items: center; justify-content: flex-end; padding-right: 7px; }
.showme { margin-left: auto; margin-right: 30px; display: flex; align-items: center; gap: 6px; font-weight: 400; font-size: 16.600px; color: #222; }

.workspace { height: 862px; display: flex; }
.sidebar { width: 262px; background: #fafafa; border-top: 1px solid #cfcfcf; border-right: 1px solid #cfcfcf; display: flex; flex-direction: column; color: #222; }
.sidetabs { height: 32px; display: flex; font-size: 17px; line-height: 30px; color: #000; }
.sidetabs b { width: 146px; padding-left: 22px; font-size: 16.200px; font-weight: 700; }
.sidetabs span { flex: 1; background: #fff; border-left: 1px solid #cfcfcf; border-bottom: 1px solid #cfcfcf; padding: 1px 6px 0 15px; font-weight: 400; font-size: 16.600px; display: flex; justify-content: space-between; color: #222; }
.sidetabs svg { margin-top: 8px; }
.devices { height: 110px; padding: 12px 0 0 18px; font-size: 17px; border-bottom: 1px solid #cfcfcf; }
.devices p { height: 22px; line-height: 22px; width: 225px; padding-left: 15px; }
.sel { background: #e5e5e5; }
.devices .phone { padding-left: 25px; }
.devices button { display: block; margin: 12px 0 0 32px; width: 160px; height: 28px; border: 1px solid #c6c6c6; border-radius: 2px; background: #fff; font: inherit; font-size: 15.300px; color: #222; }
h2 { font-size: 17px; font-weight: 600; line-height: 22px; color: #333; }
.size { height: 76px; padding: 3px 0 0 18px; border-bottom: 1px solid #cfcfcf; }
.select { width: 225px; height: 28px; margin-top: 2px; padding-bottom: 3px; border-bottom: 1px solid #bdbdbd; display: flex; align-items: center; justify-content: space-between; font-size: 15.350px; white-space: nowrap; }
.sheets { flex: 1; padding: 3px 0 0 18px; }
.sheets p { height: 25px; display: flex; align-items: center; gap: 6px; font-size: 17.250px; padding-left: 4px; }
.sheets h2 { margin-bottom: 8px; }
.sheets svg { margin-top: 5px; }
.objects { height: 227px; border-top: 1px solid #cfcfcf; padding: 3px 0 0 18px; }
.objgrid { display: grid; grid-template-columns: 124px 1fr; grid-auto-rows: 25px; margin-top: 2px; font-size: 13.300px; }
.objgrid p { display: flex; align-items: center; gap: 9px; }
.objgrid svg { width: 15px; height: 15px; margin-left: 1px; fill: none; stroke: #555; stroke-width: 1; }
.toggle { display: flex; width: 224px; height: 28px; margin-top: 15px; border: 1px solid #c6c6c6; font-size: 15.200px; line-height: 26px; text-align: center; }
.toggle span { flex: 1; background: #fff; }
.toggle .on { background: #666; color: #fff; margin: -1px 0; line-height: 28px; }
.check { display: flex; align-items: center; gap: 6px; margin-top: 15px; font-size: 17.200px; }
.check i { width: 18px; height: 18px; background: #fff; border: 1px solid #c6c6c6; }

.stage { flex: 1; display: flex; flex-direction: column; }
.canvas { height: 841px; display: flex; }
.dash { position: relative; width: 1637px; background: #00ab00; border: 2px solid #2c6670; display: flex; gap: 8px; padding: 0 10px; }
.dash-left { width: 1175px; }
.dash-right { width: 430px; }
.dash h1 { font-weight: 300; font-size: 25px; letter-spacing: .46px; height: 59px; line-height: 62px; padding-left: 4px; color: #303030; }
.dash h1.tight { letter-spacing: .26px; line-height: 61px; }
.map { position: relative; height: 355px; background: #fff; border: 1px solid #e6e6e6; overflow: hidden; }
.map svg { margin: -1px; }
.attrib { position: absolute; left: 5px; bottom: 0; font: 13px/19px "Liberation Sans", sans-serif; color: #777; }
.land path { fill: #e5e5e5; }
.land .lt { fill: #e9e9e9; }
.land .sea { fill: #fff; }
.land .brd { fill: none; stroke: #b6b6b6; stroke-width: 3; stroke-linejoin: round; }
.relief ellipse { fill: #ebebeb; }
#labels text { font: 400 7.500px "Noto Sans", sans-serif; fill: #858585; text-anchor: middle; paint-order: stroke; stroke: #eee; stroke-width: 1.500px; }
#dots circle { stroke: #f3f3f3; stroke-width: 1.200; }

.colchart { height: 354px; background: #fff; display: grid; grid-template: 20px 1fr / 59px 1fr; }
.cc-head { grid-column: 1 / 3; text-align: center; font-weight: 400; font-size: 15.100px; color: #333; padding-left: 59px; }
.cc-axis { position: relative; color: #777; }
.cc-title { position: absolute; left: 0; top: 18px; height: 134px; line-height: 20px; writing-mode: vertical-rl; transform: rotate(180deg); font-weight: 400; font-size: 14.800px; color: #333; white-space: nowrap; }
.cc-tick { position: absolute; right: 7px; }
.t30 { top: 6px; } .t20 { top: 59px; } .t10 { top: 111px; } .t0 { top: 153px; }
.cc-plot { display: grid; grid-template-columns: repeat(53, 21.050px); border-left: 1px solid #ececec; margin-left: -1px; height: 179px; background: linear-gradient(#ececec, #ececec) 0 16px / 100% 1px no-repeat, linear-gradient(#ececec, #ececec) 0 69px / 100% 1px no-repeat, linear-gradient(#ececec, #ececec) 0 121px / 100% 1px no-repeat, linear-gradient(#ececec, #ececec) 0 174px / 100% 1px no-repeat; }
.col { display: flex; flex-direction: column; align-items: center; height: 334px; }
.col .well { height: 174px; display: flex; align-items: flex-end; }
.col .bar { width: 16px; }
.col .tk { height: 5px; align-self: stretch; border-right: 1px solid #ececec; }
.col .lb { margin-top: 1px; writing-mode: vertical-rl; transform: rotate(180deg); text-align: right; line-height: 20px; font-size: 15px; letter-spacing: .38px; color: #555; white-space: nowrap; }

.rowchart { height: 768px; background: #fff; }
.rc-head { height: 22px; border-bottom: 1px solid #c4c4c4; font-weight: 400; line-height: 20px; font-size: 15.100px; color: #333; }
.rc-head span { display: block; width: 155px; text-align: right; }
.rc-rows { height: 683px; border-bottom: 1px solid #c4c4c4; background: linear-gradient(#f0f0f0, #f0f0f0) 242px 0 / 1px 100% no-repeat, linear-gradient(#f0f0f0, #f0f0f0) 336px 0 / 1px 100% no-repeat, linear-gradient(#f0f0f0, #f0f0f0) 376px 0 / 1px 100% no-repeat, linear-gradient(#f0f0f0, #f0f0f0) 417px 0 / 1px 100% no-repeat; }
.row { height: 12.868px; display: grid; grid-template-columns: 160px 135px 135px; }
.row span { text-align: right; padding-right: 5px; line-height: 11.800px; letter-spacing: .38px; color: #555; white-space: nowrap; }
.row div { border-left: 1px solid #c0c0c0; }
.row div:last-child { border-right: 1px solid #d8d8d8; }
.row i { display: block; height: 10px; margin-top: .6px; background: #4e79a7; }
.rc-foot { height: 63px; display: grid; grid-template-columns: 160px 135px 135px; color: #555; }
.f1, .f2 { border-left: 1px solid #c0c0c0; }
.f2 { border-right: 1px solid #d8d8d8; }
.ticks { display: flex; height: 35px; line-height: 32px; }
.f1 .ticks { gap: 47px; padding-left: 1px; }
.f2 .ticks { padding-left: 1px; justify-content: space-between; padding-right: 4px; }
.rc-foot b { display: block; font-weight: 400; line-height: 18px; text-align: center; color: #333; white-space: nowrap; }
.closebox { position: absolute; left: -2px; top: -2px; width: 20px; height: 42px; background: #2c6670; }
.grip { position: absolute; left: 791px; top: -2px; width: 50px; height: 13px; background: #2c6670; border-radius: 0 0 2px 2px; padding: 5px 5px 0; }
.grip i { display: block; height: 1px; background: #fff; margin-bottom: 3px; }
.vscroll { width: 21px; background: #f0f0f0; display: flex; flex-direction: column; }
.vscroll svg, .hscroll svg { width: 21px; height: 21px; fill: none; stroke: #505050; stroke-width: 2; }
.vscroll i { flex: 1; background: #cdcdcd; margin: 0 1px; }
.vscroll svg:last-child { height: 23px; }
.hscroll { height: 21px; background: #f0f0f0; display: flex; }
.hscroll i { flex: 1; background: #cdcdcd; margin: 1px 0; }
.hscroll em { width: 21px; }

.tabs { height: 37px; background: #e6e6e6; border-top: 1px solid #c4c4c4; border-bottom: 1px solid #cfcfcf; display: flex; }
.tab { border-right: 1px solid #c4c4c4; padding: 1px 0 0 7px; display: flex; align-items: center; font-size: 15.200px; white-space: nowrap; color: #2a2a2a; }
.ds { width: 163px; padding-left: 10px; gap: 6px; letter-spacing: .1px; }
.w184 { width: 184px; letter-spacing: .1px; } .w237 { width: 237px; padding-left: 6px; font-size: 15.100px; } .w173 { width: 173px; padding-left: 6px; letter-spacing: .5px; }
.tab.active { width: 122px; background: #fafafa; font-weight: 600; font-size: 14.400px; gap: 5px; padding-left: 8px; padding-top: 0; color: #444; }
.tab.new { width: 32px; padding: 0 0 0 9px; }
.tab.new svg { width: 16px; height: 16px; fill: none; stroke: #666; }
.tab.new .pl { stroke-width: 2; stroke: #555; }
.status { position: relative; height: 26px; background: #ebebeb; display: flex; }
.status > span { border-right: 1px solid #c9c9c9; display: flex; align-items: center; }
.status .s0 { width: 1502px; } .s1 { width: 157px; } .s2 { width: 31px; } .s3 { width: 33px; } .s4 { width: 57px; }
.status .s5 { width: 71px; padding-left: 7px; }
.status .s6 { flex: 1; padding-left: 8px; border: 0; }
.status .tooltip { position: absolute; left: 317px; top: 1px; width: 42px; height: 25px; background: #fff; border: 1px solid #767676; box-shadow: 3px 3px 2px rgba(0, 0, 0, .4); justify-content: center; font-weight: 400; font-size: 14.300px; color: #444; }

.taskbar { height: 50px; background: #060b14; display: flex; color: #fff; }
.sys { display: flex; width: 183px; }
.sys span { width: 60px; display: flex; align-items: center; justify-content: center; }
.apps { display: flex; gap: 1px; }
.apps > span { position: relative; width: 61px; display: flex; align-items: center; justify-content: center; }
.apps .mail { background: #24282e; }
.mail em { position: absolute; left: 34px; top: 24px; width: 23px; height: 21px; border-radius: 50%; background: #24282e; border: 1px solid #aaa; font-weight: 600; font-size: 13.500px; line-height: 19px; text-align: center; letter-spacing: -.5px; }
.running::after { content: ""; position: absolute; left: 0; right: 0; bottom: 0; height: 3px; background: #76b9ed; }
.ff::after { left: 5px; right: 5px; }
.current { background: #3a3f47; }
.tabicon { width: 27px; height: 28px; background: #fafafa; display: flex; align-items: center; justify-content: center; }
.tray { margin-left: auto; display: flex; align-items: center; font-weight: 400; font-size: 14.200px; letter-spacing: -.05px; }
.t1 { margin-left: 27px; } .t2 { margin-left: 12px; } .t3 { margin-left: 10px; } .t4 { margin-left: 9px; } .t5 { margin-left: 9px; }
.lang { margin-left: 13px; width: 30px; }
.clock { margin-left: 15px; width: 80px; text-align: center; line-height: 23px; white-space: nowrap; }
.t6 { margin-left: 22px; }
.peek { width: 1px; height: 50px; background: #555; margin: 0 5px 0 24px; }
.tray > svg:first-child { margin-right: 3px; }
```
FILE: charts.js
```js
const palette = ["#4e79a7","#a0cbe8","#f28e2b","#ffbe7d","#59a14f","#8cd17d","#b6992d","#f1ce63","#499894","#86bcb6","#e15759","#ff9d9a","#79706e","#bab0ac","#d37295","#fabfd2","#b07aa1","#d4a6c8","#9d7660","#d7b5a6"];
const countries = ["Afghanistan","Algeria","Australia","Austria","Bahrain","Belgium","Brazil","Cambodia","Canada","Croatia","Denmark","Egypt","Estonia","Finland","France","Georgia","Germany","Greece","Hong Kong","India","Iran","Iraq","Israel","Italy","Japan","Kuwait","Lebanon","Macau","Mainland China","Malaysia","Nepal","Netherlands","North Macedonia","Norway","Oman","Others","Pakistan","Philippines","Romania","Russia","San Marino","Singapore","South Korea","Spain","Sri Lanka","Sweden","Switzerland","Taiwan","Thailand","UK","United Arab Emirates","US","Vietnam"];
const records = { "Australia": 5, "Canada": 3, "Mainland China": 31, "US": 17 };
const cases = { "Mainland China": 128, "South Korea": 2 };

document.getElementById("cols").innerHTML = countries.map((c, i) => {
  const h = (records[c] || 1) * 5.27;
  return `<div class="col"><div class="well"><div class="bar" style="height:${h.toFixed(1)}px;background:${palette[i % 20]}"></div></div><div class="tk"></div><span class="lb">${c}</span></div>`;
}).join("");

document.getElementById("rows").innerHTML = countries.map(c => {
  const n = records[c] || 1;
  const w = n === 1 ? 3 : n * 4.05 - 1;
  return `<div class="row"><span>${c}</span><div><i style="width:${cases[c] || 0}px"></i></div><div><i style="width:${w.toFixed(1)}px"></i></div></div>`;
}).join("");

// Marks and labels: [tile origin x, [x, y, value] ...] in thirds of a pixel from the tile origin
const marks = [
  [360, [[486,207,8],[588,453,11],[995,906,6]]],
  [740, [[408,84,5],[468,150,13],[330,174,13],[465,216,12],[327,255,10],[243,309,9],[294,309,11],[291,330,5],[336,321,16],[276,381,14],[321,378,6],[357,411,0],[387,390,9],[375,369,3],[345,405,3],[459,387,18],[432,438,12],[432,456,17],[609,432,15],[228,447,3],[549,513,6],[606,519,1],[537,546,2],[696,522,0],[789,516,0],[642,561,5],[666,591,4],[693,609,10],[714,645,14],[798,570,16],[936,570,10],[894,621,19],[912,750,4],[1104,111,19],[276,567,1],[489,591,11]]],
  [1020, [[273,630,12],[237,681,8],[267,708,7],[246,774,9],[261,801,1],[341,627,7],[345,624,18],[399,612,7],[405,669,17],[459,492,2],[540,495,4],[504,1017,2]]]
];
const names = [
  [360, [[487,203,"Canada"],[587,434,"United"],[587,460,"States"],[793,774,"Colombia"],[565,612,"Mexico"],[797,909,"Peru"],[994,901,"Brazil"]]],
  [740, [[276,373,"France"],[226,445,"Spain"],[276,561,"Algeria"],[489,583,"Egypt"],[532,457,"Turkey"],[1102,106,"Russia"],[1065,497,"China"],[893,615,"India"],[446,1065,"South"]]],
  [1020, [[540,490,"Japan"],[345,811,"Indonesia"],[504,1012,"Australia"]]]
];
const at = (o, x, y) => [(o + x / 3).toFixed(1), (160 + y / 3).toFixed(1)];
document.getElementById("labels").innerHTML = names.map(([o, l]) => l.map(([x, y, t]) => {
  const [px, py] = at(o, x, y + 8);
  return `<text x="${px}" y="${py}">${t}</text>`;
}).join("")).join("");
document.getElementById("dots").innerHTML = marks.map(([o, l]) => l.map(([x, y, c]) => {
  const [px, py] = at(o, x, y);
  return `<circle cx="${px}" cy="${py}" r="5.5" fill="${palette[c]}"/>`;
}).join("")).join("");
```
